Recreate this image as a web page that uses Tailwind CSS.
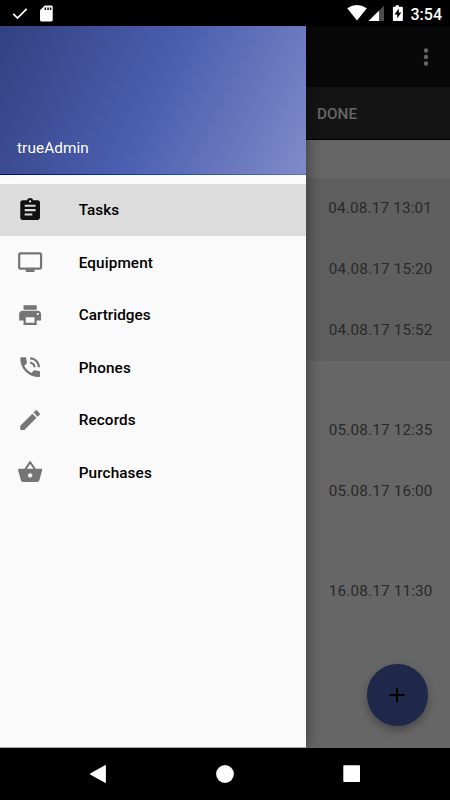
<!DOCTYPE html>
<html lang="en">
<head>
<meta charset="utf-8">
<title>trueAdmin</title>
<script src="https://cdn.jsdelivr.net/npm/@tailwindcss/browser@4"></script>
</head>
<body class="w-[450px] h-[800px] overflow-hidden bg-black font-['Roboto',sans-serif] flex flex-col">
  <header class="h-[26px] shrink-0 flex items-center justify-between bg-black text-white">
    <div class="flex items-center pl-[12px] gap-[9px]">
      <svg class="w-[17px] h-[17px]" viewBox="0 0 17 17" fill="none" stroke="white" stroke-width="1.7"><path d="M1.3 8.8 5.5 13 14.7 3.8"/></svg>
      <svg class="w-[17px] h-[17px]" viewBox="0 0 17 17"><path fill="white" fill-rule="evenodd" d="M6.800.600h6.500q1.400 0 1.400 1.400v13q0 1.400-1.400 1.400H3.400Q2 16.400 2 15V5.200zM6.600 2.500v2.600h1.500V2.500zm2.700 0v2.600h1.500V2.500zm2.500 0v2.600h1.500V2.500z"/></svg>
    </div>
    <div class="flex items-center pr-[8px]">
      <svg class="w-[64px] h-[26px]" viewBox="0 0 64 26">
        <path fill="white" d="M.2 8.200Q10 1.800 19.800 8.200L10 20.400z"/>
        <path fill="#4c4c4c" d="M37 5.700V21H21.500z"/><path fill="white" d="M32 10.700V21H21.500z"/>
        <path fill="white" fill-rule="evenodd" d="M48.700 5.200h3.200v1.500h3q1 0 1 1V20q0 1-1 1h-8q-1 0-1-1V7.700q0-1 1-1h1.800zM51.800 8.500l-4.300 6h2.700v4l4.100-6h-2.500z"/>
      </svg>
      <span class="text-[16px] leading-[26px] font-medium pt-[3px]">3:54</span>
    </div>
  </header>

  <main class="relative h-[722px] shrink-0 bg-[#666] overflow-hidden">
    <div class="h-[61px] bg-[#080808] flex items-center justify-end pr-[21px]">
      <svg class="w-[6px] h-[20px]" viewBox="0 0 6 20" fill="#666"><circle cx="3" cy="3.500" r="2.200"/><circle cx="3" cy="10" r="2.200"/><circle cx="3" cy="16.500" r="2.200"/></svg>
    </div>
    <div class="h-[53px] bg-[#141414] border-b border-black pl-[317px] flex items-center text-[#666] text-[15.300px] font-medium pt-[3px]">DONE</div>
    <div class="text-right text-[15.300px] text-[#292929] leading-[60px] tracking-[0.150px]">
      <section class="pt-[38px]">
        <div class="bg-[#5f5f5f]">
          <div class="h-[61px] pr-[18px]">04.08.17 13:01</div>
          <div class="h-[61px] pr-[17.500px]">04.08.17 15:20</div>
          <div class="h-[61px] pr-[17.500px]">04.08.17 15:52</div>
        </div>
      </section>
      <section class="pt-[39px]">
        <div class="h-[61px] pr-[17.500px]">05.08.17 12:35</div>
        <div class="h-[61px] pr-[17.500px]">05.08.17 16:00</div>
      </section>
      <section class="pt-[39px]">
        <div class="h-[61px] pr-[17.500px]">16.08.17 11:30</div>
      </section>
    </div>
    <div class="absolute left-[366.500px] top-[638px] w-[61.500px] h-[61.500px] rounded-full bg-[#1e284a] shadow-[0_4px_9px_rgba(0,0,0,0.3)] flex items-center justify-center">
      <svg class="w-[16px] h-[16px]" viewBox="0 0 16 16" stroke="black" stroke-width="2"><path d="M.5 8h15M8 .5v15"/></svg>
    </div>

    <aside class="absolute left-0 top-0 w-[306.400px] h-[722px] bg-[#fafafa] border-b border-[#a5a5a5] shadow-[0_0_14px_rgba(0,0,0,0.45)]">
      <div class="relative h-[149px] bg-[linear-gradient(116deg,#324180_0%,#4b5eb0_50%,#7f8cc8_100%)] px-[17px] pt-[111px] text-[15.300px] leading-[22px] tracking-[0.100px] text-white">
        trueAdmin
        <div class="absolute left-0 bottom-0 w-full h-px bg-[linear-gradient(90deg,#00008f,#0a3cab_45%,#6472c0)]"></div>
      </div>
      <nav class="pt-[8.500px] text-[15.300px] font-medium text-black">
        <div class="h-[52.500px] flex items-center pl-[17px] gap-[35.500px] bg-[#dcdcdc]">
          <svg class="w-[26.250px] h-[26.250px]" viewBox="0 0 24 24" fill="#111"><path d="M19 3h-4.180C14.400 1.840 13.300 1 12 1c-1.300 0-2.400.84-2.820 2H5c-1.100 0-2 .9-2 2v14c0 1.100.9 2 2 2h14c1.100 0 2-.9 2-2V5c0-1.100-.9-2-2-2zm-7 0c.55 0 1 .45 1 1s-.45 1-1 1-1-.45-1-1 .45-1 1-1zm2 14H7v-2h7v2zm3-4H7v-2h10v2zm0-4H7V7h10v2z"/></svg>
          <span class="pt-[2px]">Tasks</span>
        </div>
        <div class="h-[52.500px] flex items-center pl-[17px] gap-[35.500px]">
          <svg class="w-[26.250px] h-[26.250px]" viewBox="0 0 24 24" fill="#757575"><path d="M21 3H3c-1.100 0-2 .9-2 2v12c0 1.100.9 2 2 2h5v2h8v-2h5c1.100 0 1.990-.9 1.990-2L23 5c0-1.100-.9-2-2-2zm0 14H3V5h18v12z"/></svg>
          <span class="pt-[2px] tracking-[0.100px]">Equipment</span>
        </div>
        <div class="h-[52.500px] flex items-center pl-[17px] gap-[35.500px]">
          <svg class="w-[26.250px] h-[26.250px]" viewBox="0 0 24 24" fill="#757575"><path d="M19 8H5c-1.660 0-3 1.340-3 3v6h4v4h12v-4h4v-6c0-1.660-1.340-3-3-3zm-3 11H8v-5h8v5zm3-7c-.55 0-1-.45-1-1s.45-1 1-1 1 .45 1 1-.45 1-1 1zm-1-9H6v4h12V3z"/></svg>
          <span class="pt-[2px]">Cartridges</span>
        </div>
        <div class="h-[52.500px] flex items-center pl-[17px] gap-[35.500px]">
          <svg class="w-[26.250px] h-[26.250px]" viewBox="0 0 24 24" fill="#757575"><path d="M20 15.500c-1.250 0-2.450-.2-3.570-.57-.1-.03-.21-.05-.31-.05-.26 0-.51.1-.71.29l-2.200 2.200c-2.830-1.440-5.150-3.750-6.590-6.580l2.200-2.210c.28-.27.36-.66.25-1.010C8.700 6.450 8.500 5.250 8.500 4c0-.55-.45-1-1-1H4c-.55 0-1 .45-1 1 0 9.390 7.610 17 17 17 .55 0 1-.45 1-1v-3.500c0-.55-.45-1-1-1zM19 12h2c0-4.970-4.030-9-9-9v2c3.870 0 7 3.130 7 7zm-4 0h2c0-2.760-2.240-5-5-5v2c1.660 0 3 1.340 3 3z"/></svg>
          <span class="pt-[2px] tracking-[0.100px]">Phones</span>
        </div>
        <div class="h-[52.500px] flex items-center pl-[17px] gap-[35.500px]">
          <svg class="w-[26.250px] h-[26.250px]" viewBox="0 0 24 24" fill="#757575"><path d="M3 17.250V21h3.750L17.810 9.940l-3.750-3.750L3 17.250zM20.710 7.040c.39-.39.39-1.020 0-1.410l-2.340-2.340c-.39-.39-1.020-.39-1.410 0l-1.830 1.830 3.750 3.750 1.830-1.830z"/></svg>
          <span class="pt-[2px] tracking-[0.100px]">Records</span>
        </div>
        <div class="h-[52.500px] flex items-center pl-[17px] gap-[35.500px]">
          <svg class="w-[26.250px] h-[26.250px]" viewBox="0 0 24 24" fill="#757575"><path d="M17.210 9l-4.380-6.560c-.19-.28-.51-.42-.83-.42-.32 0-.64.14-.83.43L6.790 9H2c-.55 0-1 .45-1 1 0 .09.010.18.040.27l2.540 9.270c.23.84 1 1.460 1.920 1.460h13c.92 0 1.690-.62 1.930-1.460l2.540-9.270L23 10c0-.55-.45-1-1-1h-4.790zM9 9l3-4.400L15 9H9zm3 8c-1.100 0-2-.9-2-2s.9-2 2-2 2 .9 2 2-.9 2-2 2z"/></svg>
          <span class="pt-[2px] tracking-[0.100px]">Purchases</span>
        </div>
      </nav>
    </aside>
  </main>

  <footer class="h-[52px] shrink-0 bg-black flex items-center justify-between px-[89px]">
    <svg class="w-[18px] h-[18px]" viewBox="0 0 18 18" fill="white"><path d="M1.600 8.300 16 .2q.9-.4.900.6v16.400q0 1-.9.600L1.600 9.700q-1.200-.7 0-1.400z"/></svg>
    <svg class="w-[18px] h-[18px]" viewBox="0 0 18 18" fill="white"><circle cx="9" cy="9" r="8.900"/></svg>
    <svg class="w-[18px] h-[18px]" viewBox="0 0 18 18" fill="white"><rect x=".3" y=".3" width="16.700" height="16.700" rx=".8"/></svg>
  </footer>
</body>
</html>
